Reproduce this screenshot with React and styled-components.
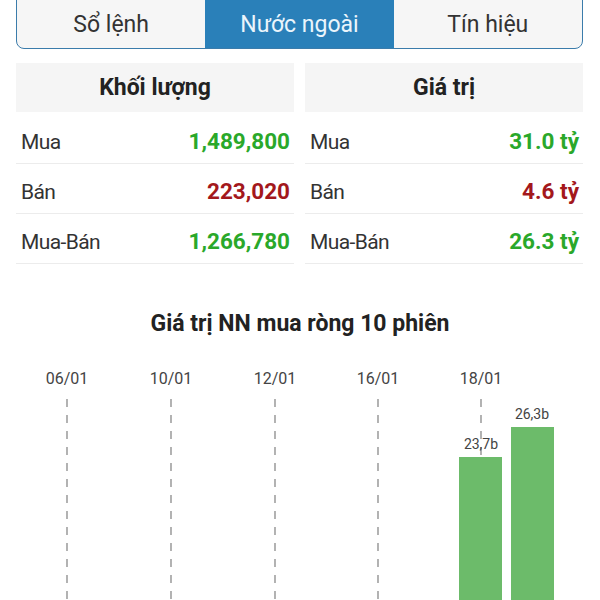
import styled, { createGlobalStyle } from 'styled-components';

const GlobalStyle = createGlobalStyle`
  html, body {
    margin: 0;
    padding: 0;
    background: #ffffff;
    font-family: Roboto, "Noto Sans", sans-serif;
    overflow: hidden;
  }
  * {
    box-sizing: border-box;
  }
`;

const Page = styled.div`
  width: 600px;
  height: 600px;
  overflow: hidden;
  background: #ffffff;
`;

const Content = styled.div`
  padding: 0 17px 0 16px;
`;

const TabBar = styled.div`
  display: grid;
  grid-template-columns: repeat(3, 1fr);
  margin-top: -8px;
  height: 57px;
  border: 1px solid #3b7cab;
  border-radius: 0 0 8px 8px;
  overflow: hidden;
  background: #f6f6f6;
`;

const Tab = styled.div`
  display: flex;
  align-items: center;
  justify-content: center;
  padding-top: 8px;
  font-size: 23px;
  color: ${({ active }) => (active ? '#eaf5fc' : '#333333')};
  background: ${({ active }) => (active ? '#2a80b9' : 'transparent')};
`;

const Stats = styled.div`
  display: grid;
  grid-template-columns: 1fr 1fr;
  column-gap: 11px;
  margin-top: 14px;
`;

const Column = styled.div`
  display: flex;
  flex-direction: column;
`;

const ColumnHead = styled.div`
  display: flex;
  align-items: center;
  justify-content: center;
  height: 49px;
  margin-bottom: 2px;
  background: #f5f5f5;
  font-size: 23px;
  font-weight: 700;
  color: #222222;
`;

const Row = styled.div`
  display: flex;
  align-items: baseline;
  justify-content: space-between;
  height: 50px;
  padding: 13px 4px 0 5px;
  border-bottom: 1px solid #ececec;
  line-height: 28px;
`;

const Label = styled.span`
  font-size: 21px;
  letter-spacing: -0.6px;
  color: #333333;
`;

const Value = styled.span`
  font-size: 22.5px;
  font-weight: 700;
  color: ${({ tone }) => (tone === 'down' ? '#a3181c' : '#2aa82a')};
`;

const ChartTitle = styled.div`
  margin-top: 46px;
  text-align: center;
  font-size: 23px;
  font-weight: 700;
  color: #222222;
`;

const ChartBox = styled.div`
  margin-top: 12px;
  height: 260px;
`;

const volume = [
  { label: 'Mua', value: '1,489,800' },
  { label: 'Bán', value: '223,020', tone: 'down' },
  { label: 'Mua-Bán', value: '1,266,780' },
];

const amount = [
  { label: 'Mua', value: '31.0 tỷ' },
  { label: 'Bán', value: '4.6 tỷ', tone: 'down' },
  { label: 'Mua-Bán', value: '26.3 tỷ' },
];

const dates = [
  { x: 67, text: '06/01' },
  { x: 171, text: '10/01' },
  { x: 275, text: '12/01' },
  { x: 378, text: '16/01' },
  { x: 481, text: '18/01' },
];

const bars = [
  { x: 459, w: 43, top: 108, label: '23,7b', lx: 481 },
  { x: 511, w: 43, top: 78, label: '26,3b', lx: 532 },
];

function NetBuyChart() {
  return (
    <svg width="600" height="260" viewBox="0 0 600 260">
      {dates.map((d) => (
        <g key={d.text}>
          <text
            x={d.x}
            y={35}
            textAnchor="middle"
            fontFamily="Roboto, sans-serif"
            fontSize="16"
            fill="#444"
          >
            {d.text}
          </text>
          <line
            x1={d.x}
            y1={50}
            x2={d.x}
            y2={260}
            stroke="#8a8a8a"
            strokeWidth="1.3"
            strokeDasharray="8 8"
          />
        </g>
      ))}
      {bars.map((b) => (
        <g key={b.label}>
          <rect x={b.x} y={b.top} width={b.w} height={260 - b.top} fill="#6cbb6a" />
          <text
            x={b.lx}
            y={b.top - 8}
            textAnchor="middle"
            fontFamily="Roboto, sans-serif"
            fontSize="14"
            fill="#444"
          >
            {b.label}
          </text>
        </g>
      ))}
    </svg>
  );
}

function StatColumn({ title, rows }) {
  return (
    <Column>
      <ColumnHead>{title}</ColumnHead>
      {rows.map((r) => (
        <Row key={r.label}>
          <Label>{r.label}</Label>
          <Value tone={r.tone}>{r.value}</Value>
        </Row>
      ))}
    </Column>
  );
}

export default function App() {
  return (
    <Page>
      <GlobalStyle />
      <Content>
        <TabBar>
          <Tab>Sổ lệnh</Tab>
          <Tab active>Nước ngoài</Tab>
          <Tab>Tín hiệu</Tab>
        </TabBar>
        <Stats>
          <StatColumn title="Khối lượng" rows={volume} />
          <StatColumn title="Giá trị" rows={amount} />
        </Stats>
      </Content>
      <ChartTitle>Giá trị NN mua ròng 10 phiên</ChartTitle>
      <ChartBox>
        <NetBuyChart />
      </ChartBox>
    </Page>
  );
}
